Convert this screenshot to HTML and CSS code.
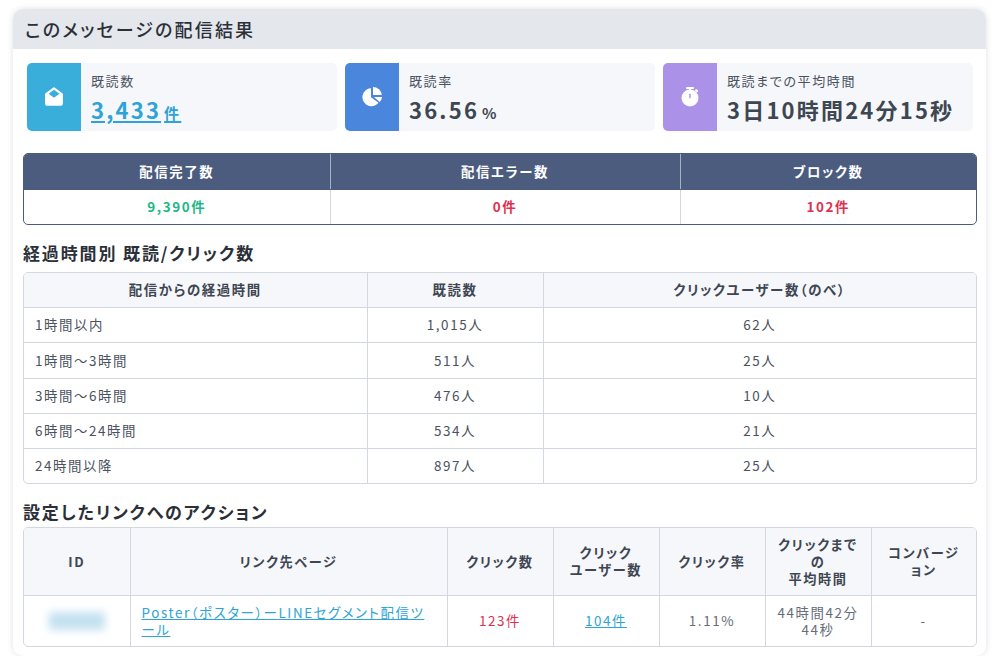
FILE: index.html
```html
<!DOCTYPE html>
<html lang="ja">
<head>
	<meta charset="UTF-8">
	<meta name="viewport" content="width=device-width, initial-scale=1.0">
	<title>このメッセージの配信結果</title>
	<link rel="stylesheet" href="styles.css">
</head>
<body>
	<div class="card">
		<h1 class="card-title">このメッセージの配信結果</h1>
		<div class="card-body">
			<div class="stats">
				<div class="stat">
					<div class="stat-icon icon-read">
						<svg width="20" height="20" viewBox="0 0 20 20">
							<path fill="#fff" d="M9 .7a1.6 1.6 0 0 1 2 0l7.3 5.6a1.6 1.6 0 0 1 .6 1.3v9.2a2 2 0 0 1-2 2H3a2 2 0 0 1-2-2V7.600a1.600 1.600 0 0 1 .6-1.300z"/>
							<path fill="#3aaedb" d="M10 2.800l5.400 4-5.400 4-5.400-4z"/>
						</svg>
					</div>
					<div class="stat-text">
						<div class="stat-label">既読数</div>
						<div class="stat-value"><a href="#" class="stat-link">3,433<small>件</small></a></div>
					</div>
				</div>
				<div class="stat">
					<div class="stat-icon icon-rate">
						<svg width="20" height="20" viewBox="0 0 20 20">
							<path fill="#fff" d="M9 1.200a9 9 0 1 0 7.500 14.500L9 10.300z"/>
							<path fill="#fff" d="M11 0a9 9 0 0 1 8.800 8H11z"/>
							<path fill="#fff" d="M12 10h8a9 9 0 0 1-2.300 5z"/>
						</svg>
					</div>
					<div class="stat-text">
						<div class="stat-label">既読率</div>
						<div class="stat-value">36.56<small>%</small></div>
					</div>
				</div>
				<div class="stat">
					<div class="stat-icon icon-time">
						<svg width="20" height="20" viewBox="0 0 20 20">
							<rect fill="#fff" x="6" y="0" width="8" height="2" rx=".7"/>
							<rect fill="#fff" x="9" y="1" width="2" height="3"/>
							<rect fill="#fff" x="15" y="2.600" width="3" height="2.400" rx=".6" transform="rotate(45 16.500 3.800)"/>
							<circle fill="#fff" cx="10" cy="11" r="8.500"/>
							<rect fill="#ab92e8" x="9.300" y="6.500" width="1.400" height="5" rx=".7"/>
						</svg>
					</div>
					<div class="stat-text">
						<div class="stat-label">既読までの平均時間</div>
						<div class="stat-value">3日10時間24分15秒</div>
					</div>
				</div>
			</div>

			<div class="table-box summary">
				<table>
					<tr>
						<th class="w-a">配信完了数</th>
						<th class="w-b">配信エラー数</th>
						<th>ブロック数</th>
					</tr>
					<tr>
						<td class="good">9,390件</td>
						<td class="bad">0件</td>
						<td class="bad">102件</td>
					</tr>
				</table>
			</div>

			<h2 class="section-title">経過時間別 既読/クリック数</h2>
			<div class="table-box">
				<table class="elapsed">
					<tr>
						<th class="w-c">配信からの経過時間</th>
						<th class="w-d">既読数</th>
						<th>クリックユーザー数（のべ）</th>
					</tr>
					<tr><td class="left">1時間以内</td><td>1,015人</td><td>62人</td></tr>
					<tr><td class="left">1時間〜3時間</td><td>511人</td><td>25人</td></tr>
					<tr><td class="left">3時間〜6時間</td><td>476人</td><td>10人</td></tr>
					<tr><td class="left">6時間〜24時間</td><td>534人</td><td>21人</td></tr>
					<tr><td class="left">24時間以降</td><td>897人</td><td>25人</td></tr>
				</table>
			</div>

			<h2 class="section-title second">設定したリンクへのアクション</h2>
			<div class="table-box">
				<table class="links">
					<tr>
						<th class="w-id">ID</th>
						<th class="w-page">リンク先ページ</th>
						<th class="w-n">クリック数</th>
						<th class="w-n">クリック<br>ユーザー数</th>
						<th class="w-n">クリック率</th>
						<th class="w-n">クリックまでの<br>平均時間</th>
						<th>コンバージョン</th>
					</tr>
					<tr>
						<td><div class="blur-id"></div></td>
						<td class="left"><a href="#">Poster（ポスター）ーLINEセグメント配信ツール</a></td>
						<td class="bad">123件</td>
						<td><a href="#">104件</a></td>
						<td class="muted">1.11%</td>
						<td class="muted">44時間42分44秒</td>
						<td class="muted">-</td>
					</tr>
				</table>
			</div>
		</div>
	</div>
</body>
</html>
```

FILE: styles.css
```css
* {
	box-sizing: border-box;
}
body {
	margin: 0;
	padding: 9px 14px 0 13px;
	background-color: #fff;
	color: #4a5260;
	font-family: "Noto Sans CJK JP", "Noto Sans", sans-serif;
	font-size: 13.4px;
	font-feature-settings: "palt" 1;
	letter-spacing: 0.12em;
}
a {
	color: #2ea3d8;
}
.card {
	height: 647px;
	border-radius: 10px;
	box-shadow: 0 0 6px rgba(60, 70, 90, 0.16);
	overflow: hidden;
}
.card-title {
	margin: 0;
	height: 40px;
	padding-left: 12px;
	background-color: #e4e7ec;
	color: #2b3038;
	font-size: 18px;
	font-weight: 500;
	line-height: 40px;
	letter-spacing: 0.12em;
}
.card-body {
	padding: 14px 9px 0 10px;
}
.stats {
	display: grid;
	grid-template-columns: 310px 310px 310px;
	column-gap: 8px;
	padding-left: 4px;
}
.stat {
	display: flex;
	height: 68px;
	border-radius: 5px;
	background-color: #f5f7fa;
	overflow: hidden;
}
.stat-icon {
	display: flex;
	align-items: center;
	justify-content: center;
	width: 54px;
}
.icon-read { background-color: #3aaedb; }
.icon-rate { background-color: #4a86dc; }
.icon-time { background-color: #ab92e8; }
.stat-text {
	padding: 8px 0 0 10px;
}
.stat-label {
	height: 20px;
	font-size: 13px;
	line-height: 20px;
}
.stat-value {
	margin-top: 1px;
	color: #3e4652;
	font-size: 22px;
	font-weight: 700;
	line-height: 34px;
	letter-spacing: 0.1em;
}
.stat-value small {
	margin-left: 3px;
	font-size: 15px;
	font-weight: 700;
}
.stat-link {
	color: #2ea3d8;
}
.table-box {
	border: 1px solid #d3d7df;
	border-radius: 5px;
	overflow: hidden;
}
table {
	width: 100%;
	table-layout: fixed;
	border-collapse: collapse;
}
th, td {
	height: 35px;
	padding: 0 11px;
	border-right: 1px solid #d3d7df;
	border-bottom: 1px solid #d3d7df;
	text-align: center;
	line-height: 17px;
}
th:last-child, td:last-child {
	border-right: 0;
}
tr:last-child td {
	border-bottom: 0;
}
th {
	background-color: #f5f7fa;
	color: #3e4652;
	font-weight: 700;
}
td.left {
	text-align: left;
}
.summary {
	margin-top: 22px;
	border-color: #4b5c7e;
}
.summary th {
	background-color: #4b5c7e;
	color: #fff;
	border-right-color: #a9b2c3;
	border-bottom-color: #4b5c7e;
}
.summary td {
	font-weight: 700;
}
.w-a { width: 306px; }
.w-b { width: 350px; }
.w-c { width: 343px; }
.w-d { width: 176px; }
.w-id { width: 106px; }
.w-page { width: 317px; }
.w-n { width: 106px; }
.good { color: #1cb886; }
.bad { color: #e0304e; }
.muted { color: #666d79; }
.section-title {
	margin: 17px 0 8px 0;
	color: #2b3038;
	font-size: 17px;
	font-weight: 700;
	line-height: 22px;
	letter-spacing: 0.11em;
}
.section-title.second {
	margin: 17px 0 4px 0;
}
.elapsed th {
	height: 34px;
}
.elapsed tr:nth-child(3) td {
	height: 36px;
}
.links th {
	height: 67px;
	padding: 0 12px;
	font-size: 13.2px;
}
.links td {
	height: 51px;
}
.blur-id {
	width: 56px;
	height: 18px;
	margin: 0 auto;
	background-color: #c4e1f1;
	filter: blur(4px);
}
```
